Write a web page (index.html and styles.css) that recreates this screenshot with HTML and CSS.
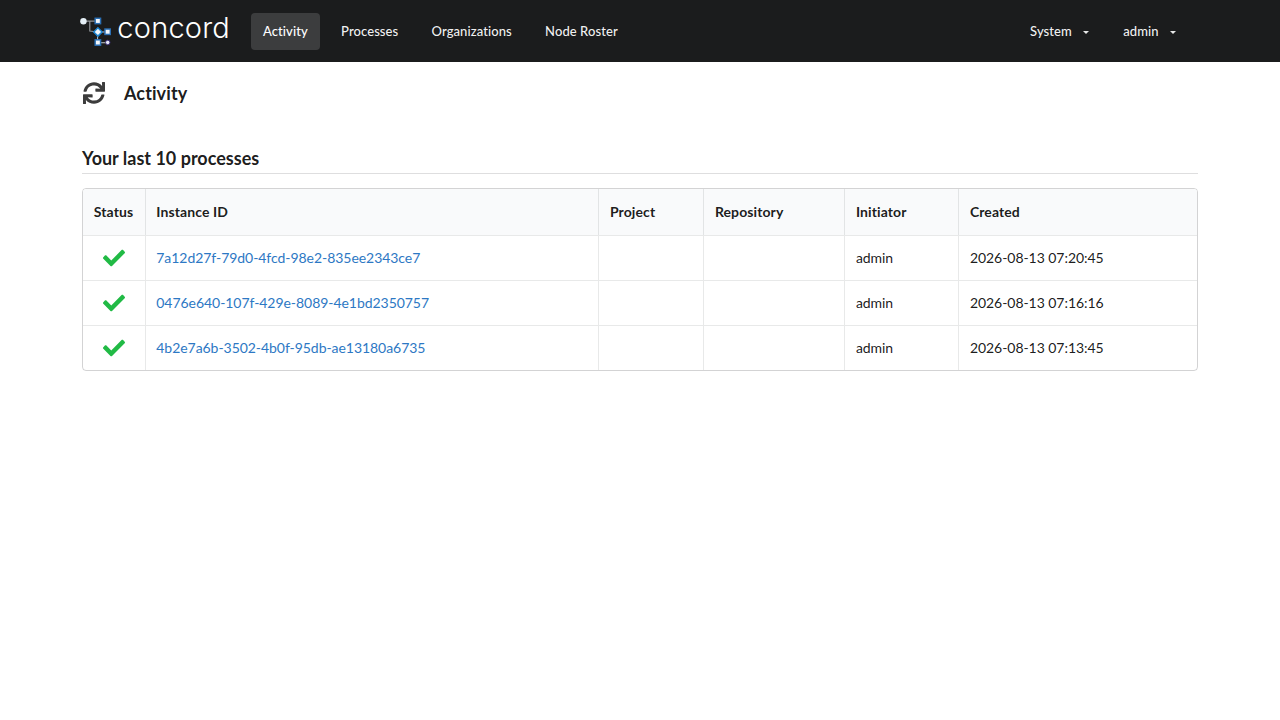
FILE: index.html
```html
<!DOCTYPE html>
<html lang="en">
<head>
  <title>Concord - Activity</title>
  <meta charset="UTF-8">
  <link rel="stylesheet" href="styles.css">
</head>
<body>
<header class="navbar">
  <div class="logo">
    <svg class="logo-mark" viewBox="0 0 32 32" width="32" height="32">
      <path d="M4 6H18M10 6V16L18 17" fill="none" stroke="#8f9398" stroke-width="1.200"/>
      <path d="M18 17H28M18 17V28M18 28H28" fill="none" stroke="#c8ccd0" stroke-width="1"/>
      <circle cx="3.500" cy="6" r="3.300" fill="#e4eef5"/>
      <rect x="15.500" y="3" width="5.500" height="5.500" fill="#f2f6fa" stroke="#2a6fb5" stroke-width="1.500"/>
      <rect x="15.300" y="14" width="6" height="6" fill="#f2f6fa" stroke="#1d84d0" stroke-width="1.500" transform="rotate(45 18.300 17)"/>
      <rect x="25.500" y="14" width="5.500" height="5.500" fill="#f2f6fa" stroke="#2a6fb5" stroke-width="1.500"/>
      <rect x="15.500" y="25" width="5.500" height="5.500" fill="#f2f6fa" stroke="#2a6fb5" stroke-width="1.500"/>
      <circle cx="28.300" cy="27.700" r="2.300" fill="#e4e6f5" stroke="#3a2f78" stroke-width="1"/>
    </svg>
    <span class="logo-text">concord</span>
  </div>
  <nav class="nav-left">
    <a class="nav-item active" href="#">Activity</a>
    <a class="nav-item" href="#">Processes</a>
    <a class="nav-item" href="#">Organizations</a>
    <a class="nav-item" href="#">Node Roster</a>
  </nav>
  <nav class="nav-right">
    <a class="nav-item" href="#">System <i class="caret"></i></a>
    <a class="nav-item" href="#">admin <i class="caret"></i></a>
  </nav>
</header>

<main class="content">
  <div class="page-title">
    <svg class="title-icon" viewBox="0 0 512 512" width="22" height="22">
      <path d="M440.650 12.570l4 82.770A247.160 247.160 0 0 0 255.830 8C134.730 8 33.910 94.920 12.290 209.820A12 12 0 0 0 24.090 224h49.050a12 12 0 0 0 11.670-9.260 175.910 175.910 0 0 1 317-56.940l-101.460-4.860a12 12 0 0 0-12.570 12v47.410a12 12 0 0 0 12 12H500a12 12 0 0 0 12-12V12a12 12 0 0 0-12-12h-47.370a12 12 0 0 0-11.980 12.570zM255.830 432a175.610 175.610 0 0 1-146-77.800l101.800 4.870a12 12 0 0 0 12.570-12v-47.400a12 12 0 0 0-12-12H12a12 12 0 0 0-12 12V500a12 12 0 0 0 12 12h47.350a12 12 0 0 0 12-12.600l-4.150-82.570A247.170 247.170 0 0 0 255.830 504c121.110 0 221.930-86.920 243.550-201.820a12 12 0 0 0-11.800-14.180h-49.050a12 12 0 0 0-11.670 9.260A175.860 175.860 0 0 1 255.830 432z"/>
    </svg>
    <h1>Activity</h1>
  </div>

  <h2 class="section-title">Your last 10 processes</h2>

  <div class="table-wrap">
    <table class="process-table">
      <thead>
        <tr>
          <th class="col-status">Status</th>
          <th class="col-id">Instance ID</th>
          <th class="col-project">Project</th>
          <th class="col-repo">Repository</th>
          <th class="col-initiator">Initiator</th>
          <th>Created</th>
        </tr>
      </thead>
      <tbody>
        <tr>
          <td class="status-cell"><svg class="check" viewBox="0 0 512 512" width="22" height="22"><path d="M173.898 439.404l-166.400-166.400c-9.997-9.997-9.997-26.206 0-36.204l36.203-36.204c9.997-9.998 26.207-9.998 36.204 0L192 312.690 432.095 72.596c9.997-9.997 26.207-9.997 36.204 0l36.203 36.204c9.997 9.997 9.997 26.206 0 36.204l-294.400 294.401c-9.998 9.997-26.207 9.997-36.204-.001z"/></svg></td>
          <td class="col-id"><a href="#">7a12d27f-79d0-4fcd-98e2-835ee2343ce7</a></td>
          <td></td>
          <td></td>
          <td>admin</td>
          <td>2026-08-13 07:20:45</td>
        </tr>
        <tr>
          <td class="status-cell"><svg class="check" viewBox="0 0 512 512" width="22" height="22"><path d="M173.898 439.404l-166.400-166.400c-9.997-9.997-9.997-26.206 0-36.204l36.203-36.204c9.997-9.998 26.207-9.998 36.204 0L192 312.690 432.095 72.596c9.997-9.997 26.207-9.997 36.204 0l36.203 36.204c9.997 9.997 9.997 26.206 0 36.204l-294.400 294.401c-9.998 9.997-26.207 9.997-36.204-.001z"/></svg></td>
          <td class="col-id"><a href="#">0476e640-107f-429e-8089-4e1bd2350757</a></td>
          <td></td>
          <td></td>
          <td>admin</td>
          <td>2026-08-13 07:16:16</td>
        </tr>
        <tr>
          <td class="status-cell"><svg class="check" viewBox="0 0 512 512" width="22" height="22"><path d="M173.898 439.404l-166.400-166.400c-9.997-9.997-9.997-26.206 0-36.204l36.203-36.204c9.997-9.998 26.207-9.998 36.204 0L192 312.690 432.095 72.596c9.997-9.997 26.207-9.997 36.204 0l36.203 36.204c9.997 9.997 9.997 26.206 0 36.204l-294.400 294.401c-9.998 9.997-26.207 9.997-36.204-.001z"/></svg></td>
          <td class="col-id"><a href="#">4b2e7a6b-3502-4b0f-95db-ae13180a6735</a></td>
          <td></td>
          <td></td>
          <td>admin</td>
          <td>2026-08-13 07:13:45</td>
        </tr>
      </tbody>
    </table>
  </div>
</main>
</body>
</html>
```

FILE: styles.css
```css
body {
  margin: 0;
  font-family: Lato, "Open Sans", sans-serif;
  font-size: 14px;
  color: rgba(0, 0, 0, 0.9);
  background: #fff;
}

a {
  text-decoration: none;
}

.navbar {
  display: flex;
  align-items: center;
  height: 62px;
  padding: 0 92px 0 80px;
  background: #1b1c1d;
}

.logo {
  display: flex;
  align-items: center;
  gap: 6px;
  width: 150px;
  margin-right: 21px;
}

.logo-text {
  margin-top: -7px;
  font-family: Inter, sans-serif;
  font-size: 29px;
  font-weight: 300;
  line-height: 36px;
  letter-spacing: 0.2px;
  color: #fff;
}

.nav-left {
  display: flex;
  gap: 9.300px;
}

.nav-right {
  display: flex;
  gap: 10px;
  margin-left: auto;
}

.nav-item {
  padding: 11px 12px;
  border-radius: 4px;
  font-size: 13px;
  font-weight: 500;
  line-height: 15px;
  letter-spacing: 0.08px;
  color: rgba(255, 255, 255, 0.95);
}

.nav-item.active {
  background: rgba(255, 255, 255, 0.15);
  color: #fff;
}

.caret {
  display: inline-block;
  margin-left: 8px;
  vertical-align: middle;
  border-top: 3.500px solid rgba(255, 255, 255, 0.9);
  border-left: 3.500px solid transparent;
  border-right: 3.500px solid transparent;
}

.content {
  width: 1116px;
  margin: 0 auto;
}

.page-title {
  display: flex;
  align-items: center;
  gap: 19px;
  height: 62px;
}

.title-icon {
  margin-left: 1px;
  fill: #3c3c3c;
}

.page-title h1 {
  margin: 0;
  font-size: 18px;
  font-weight: 700;
  letter-spacing: 0.1px;
}

.section-title {
  margin: 24px 0 14px;
  padding-bottom: 4px;
  border-bottom: 1px solid rgba(34, 36, 38, 0.15);
  font-size: 18px;
  font-weight: 700;
  line-height: 21px;
}

.table-wrap {
  border: 1px solid rgba(34, 36, 38, 0.2);
  border-radius: 4px;
  overflow: hidden;
}

.process-table {
  width: 100%;
  border-collapse: collapse;
  table-layout: fixed;
}

.process-table th {
  height: 46px;
  padding: 0 11px 0 11.400px;
  box-sizing: border-box;
  background: #f9fafb;
  font-weight: 700;
  text-align: left;
  letter-spacing: 0.1px;
  border-bottom: 1px solid rgba(34, 36, 38, 0.1);
}

.process-table td {
  height: 45px;
  padding: 0 11px 0 11.400px;
  box-sizing: border-box;
  border-top: 1px solid rgba(34, 36, 38, 0.1);
  letter-spacing: -0.05px;
}

.process-table th + th,
.process-table td + td {
  border-left: 1px solid rgba(34, 36, 38, 0.1);
}

.process-table a {
  color: #2d78c4;
}

.process-table .col-status,
.process-table .col-id {
  padding-left: 10.800px;
}

.col-status { width: 62px; }
.col-id { width: 453px; }
.col-project { width: 105px; }
.col-repo { width: 141px; }
.col-initiator { width: 114px; }

.status-cell {
  text-align: center;
}

.check {
  display: block;
  margin: 0 auto;
  fill: #21ba45;
}
```
